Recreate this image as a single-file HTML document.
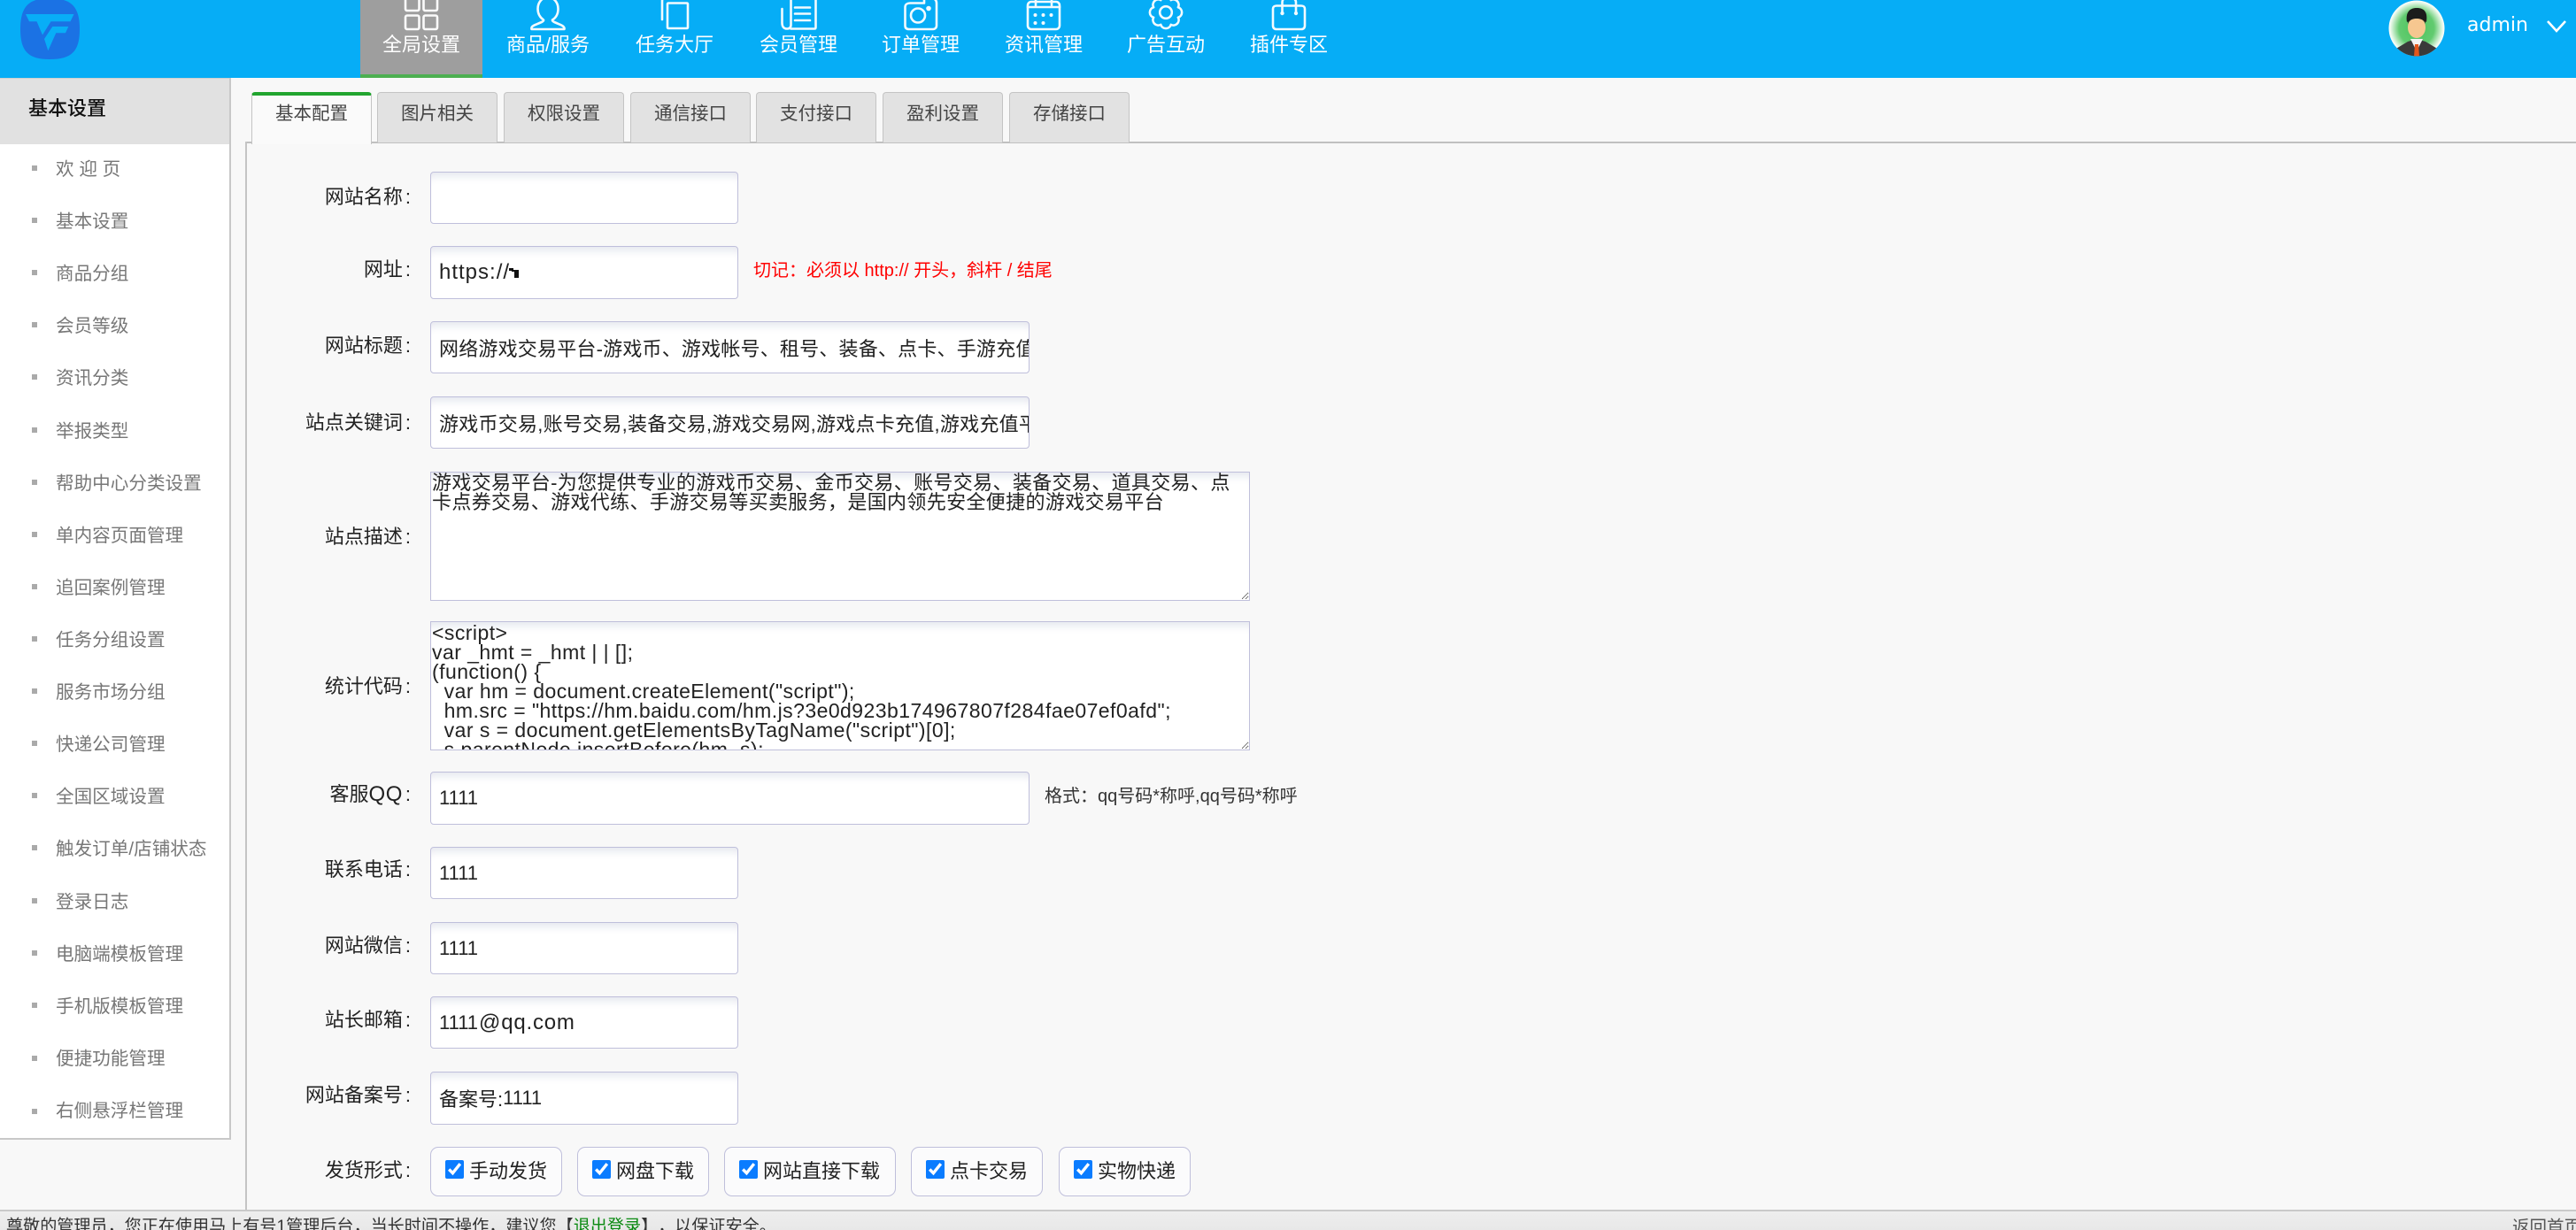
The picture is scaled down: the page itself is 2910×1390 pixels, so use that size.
<!DOCTYPE html>
<html lang="zh">
<head>
<meta charset="utf-8">
<title>管理后台</title>
<style>
*{box-sizing:border-box}
html,body{margin:0;padding:0;width:2910px;height:1390px;overflow:hidden;background:#f8f8f8;font-family:"Liberation Sans","Noto Sans CJK SC",sans-serif;color:#222;text-spacing-trim:space-all}
.a{position:absolute}
#hd{position:absolute;left:0;top:0;width:2910px;height:88px;background:#06adf6;overflow:hidden}
#act{position:absolute;left:407px;top:0;width:138px;height:88px;background:#9e9e9e;border-bottom:4px solid #4caf50}
.nt{position:absolute;top:36px;width:138px;height:30px;line-height:30px;text-align:center;font-size:22px;color:#fff;white-space:nowrap}
#side{position:absolute;left:0;top:88px;width:261px;height:1200px;background:#fff;border-right:2px solid #c8c8c8;border-bottom:2px solid #c8c8c8}
#sh{position:absolute;left:0;top:0;width:259px;height:75px;background:#e1e1e1;border-top:1px solid #d0d0d0;font-size:22px;font-weight:500;color:#111;line-height:67px;padding-left:32px}
.si{position:absolute;left:63px;height:30px;line-height:30px;font-size:20.6px;color:#777;white-space:nowrap;margin-top:2px}
.bl{position:absolute;left:36px;width:6px;height:6px;background:#aaa}
.tab{position:absolute;top:104px;width:136px;height:57px;background:#e2e2e2;border:1px solid #c4c4c4;border-bottom:none;border-radius:4px 4px 0 0;text-align:center;font-size:20.5px;line-height:48px;color:#444}
.tab.on{background:#fafafa;border-top:4px solid #22a52f;height:59px;line-height:42px;z-index:3}
#pl{position:absolute;left:277px;top:160px;width:2633px;height:2px;background:#c0c0c0}
#pv{position:absolute;left:277px;top:160px;width:2px;height:1208px;background:#c4c4c4}
.lb{position:absolute;right:2446px;height:30px;line-height:30px;font-size:22px;color:#222;white-space:nowrap;text-align:right}
.lb i{font-style:normal;margin-left:3px}
.ip{position:absolute;left:486px;background:#fff;border:1.5px solid #bfbfdb;border-radius:4px;box-shadow:inset 0 11px 10px -7px #e4e6ee;font-size:22px;color:#222;white-space:nowrap;overflow:hidden;padding-left:9px;display:flex;align-items:center;height:59px}
.n{font-size:22px}
textarea{position:absolute;left:486px;width:926px;height:146px;margin:0;padding:1px 0 0 1px;border:1.5px solid #bfbfdb;border-radius:0;background:#fff;box-shadow:inset 0 11px 10px -7px #e4e6ee;color:#222;font-family:"Liberation Sans","Noto Sans CJK SC",sans-serif;font-size:22px;line-height:22px;overflow:hidden;white-space:pre;resize:both;outline:none}
.ck{position:absolute;top:1296px;height:56px;background:#fbfbfc;border:1.5px solid #bfbfdb;border-radius:9px;font-size:22px;color:#222;white-space:nowrap}
.ck input{position:absolute;left:15.5px;top:13.5px;width:21px;height:21px;margin:0;accent-color:#0a7cff}
.ck span{position:absolute;left:43px;top:12px;line-height:30px}
#ft{position:absolute;left:0;top:1367px;width:2910px;height:23px;background:linear-gradient(#eee,#e8e8e8);border-top:2px solid #c9c9c9;overflow:hidden;font-size:19.1px;color:#333;z-index:5}
#ft .l{position:absolute;left:7px;top:4px;line-height:28px;white-space:nowrap}
#ft .r{position:absolute;left:2838px;top:4px;line-height:28px;white-space:nowrap;color:#555;font-size:19.5px}
#ft b{font-weight:400;color:#0b8a12}
</style>
</head>
<body>
<div id="hd">
  <svg class="a" style="left:0;top:0" width="130" height="88" viewBox="0 0 130 88">
    <path d="M23 33C23 8 32-2 56-2C81-2 90 8 90 33C90 58 81 67 56 67C32 67 23 58 23 33Z" fill="#1b72e4"/>
    <path d="M29 16H83.500L79.500 24.300H57.500L48 39.500L41.500 24.300H33Z" fill="#08aef7"/>
    <path d="M77.300 30L74 37.300H63.300L54.300 57.300L50 44L59.300 30Z" fill="#08aef7"/>
  </svg>
  <div id="act"></div>
  <svg class="a" style="left:0;top:0" width="1600" height="60" viewBox="0 0 1600 60" fill="none" stroke="#fff" stroke-width="2.600" stroke-linecap="round" stroke-linejoin="round" opacity=".95">
    <rect x="458" y="-4" width="15.500" height="16" rx="2"/><rect x="478.500" y="-4" width="15.500" height="16" rx="2"/>
    <rect x="458" y="17.500" width="15.500" height="15.500" rx="2"/><rect x="478.500" y="17.500" width="15.500" height="15.500" rx="2"/>
    <path d="M619-3C612-3 607.500 3 607.500 10C607.500 16 610.500 20 614 22.500C614.500 24 612 25 606 27.500C601 29.500 600 30.500 600.500 33H637.500C638 30.500 636 29 632 27.500C626 25 623.500 24 624 22.500C628 20 630.500 16 630.500 10C630.500 3 626-3 619-3Z"/>
    <rect x="754" y="3.500" width="23" height="28.500" rx="1"/><path d="M748 22V1C748-1 749-2 751-2H770"/>
    <path d="M883.500 10V26C883.500 30 885.500 32.500 889 32.500C892 32.500 893.500 31 893.500 28V-4M893.500 32.500H920C921 32.500 921.500 32 921.500 31V-4"/>
    <path d="M898 8.500H915M898 15.500H915M898 23H915"/>
    <path d="M1028 3.500H1044V-2H1052C1056 -2 1058 0 1058 4V29C1058 31.500 1056 33 1054 33H1027C1024 33 1022.500 31.500 1022.500 29V8C1022.500 5 1025 3.500 1028 3.500Z"/>
    <circle cx="1037" cy="17.500" r="8"/><circle cx="1049" cy="9.500" r="1.500" fill="#fff"/>
    <rect x="1161" y="2" width="36" height="31" rx="4"/><path d="M1161 8H1197M1170-3V6M1188-3V6"/>
    <g fill="#fff" stroke="none"><circle cx="1169.500" cy="17" r="2"/><circle cx="1178.500" cy="17" r="2"/><circle cx="1187.500" cy="17" r="2"/><circle cx="1169.500" cy="26" r="2"/><circle cx="1178.500" cy="26" r="2"/></g>
    <g transform="translate(1317 14)"><path d="M5.740 13.860A6 6 0 0 0 13.860 5.740A6 6 0 0 0 13.860 -5.740A6 6 0 0 0 5.740 -13.860A6 6 0 0 0 -5.740 -13.860A6 6 0 0 0 -13.860 -5.740A6 6 0 0 0 -13.860 5.740A6 6 0 0 0 -5.740 13.860A6 6 0 0 0 5.740 13.860Z"/><circle r="6.800"/></g>
    <path d="M1442 6.500H1470C1472.500 6.500 1474 8 1474 10V29C1474 31.500 1472.500 33 1470 33H1442C1439.500 33 1438 31.500 1438 29V10C1438 8 1439.500 6.500 1442 6.500Z"/>
    <path d="M1448.500 14V3C1448.500 -2 1452 -3 1456 -3C1460 -3 1464 -2 1464 3V14"/>
    <g fill="#fff" stroke="none"><circle cx="1448.500" cy="15" r="2.200"/><circle cx="1464" cy="15" r="2.200"/></g>
  </svg>
  <div class="nt" style="left:407px">全局设置</div>
  <div class="nt" style="left:550px">商品/服务</div>
  <div class="nt" style="left:693px">任务大厅</div>
  <div class="nt" style="left:833px">会员管理</div>
  <div class="nt" style="left:971px">订单管理</div>
  <div class="nt" style="left:1110px">资讯管理</div>
  <div class="nt" style="left:1248px">广告互动</div>
  <div class="nt" style="left:1387px">插件专区</div>
  <svg class="a" style="left:2698px;top:0" width="64" height="64" viewBox="0 0 64 64">
    <defs>
      <radialGradient id="g" cx="50%" cy="50%" r="50%"><stop offset="0" stop-color="#4ec45e"/><stop offset=".62" stop-color="#62cb70"/><stop offset=".94" stop-color="#f2fbf2"/><stop offset="1" stop-color="#fff"/></radialGradient>
      <clipPath id="c"><circle cx="32" cy="32" r="31.500"/></clipPath>
    </defs>
    <g clip-path="url(#c)">
      <rect width="64" height="64" fill="url(#g)"/>
      <path d="M7 56L22 47L32 44L42 47L57 56V64H7Z" fill="#3a3a3a"/>
      <path d="M25 44L32 58L39 44Z" fill="#f4f4f4"/>
      <path d="M30 50H34L35 64H29Z" fill="#e4571c"/>
      <path d="M21 25C19 12 26 9 32 9C39 9 45 12 43 25L40 23H24Z" fill="#1c1c1c"/>
      <ellipse cx="32" cy="31" rx="10" ry="12" fill="#f6c790"/>
      <path d="M22 27C22 19 26 16 32 19C38 16 42 19 42 27C40 22 36 21 32 21C28 21 24 22 22 27Z" fill="#1c1c1c"/>
    </g>
  </svg>
  <div class="a" style="left:2787px;top:14px;line-height:30px;font-family:'DejaVu Sans',sans-serif;font-size:22px;color:#fff">admin</div>
  <svg class="a" style="left:2875px;top:20px" width="26" height="20" viewBox="0 0 26 20"><path d="M3 4L13 15L23 4" fill="none" stroke="#fff" stroke-width="2.600"/></svg>
</div>

<div id="side">
  <div id="sh">基本设置</div>
</div>
<div class="bl" style="top:187px"></div><div class="si" style="top:175px">欢 迎 页</div>
<div class="bl" style="top:246px"></div><div class="si" style="top:234px">基本设置</div>
<div class="bl" style="top:305px"></div><div class="si" style="top:293px">商品分组</div>
<div class="bl" style="top:364px"></div><div class="si" style="top:352px">会员等级</div>
<div class="bl" style="top:423px"></div><div class="si" style="top:411px">资讯分类</div>
<div class="bl" style="top:483px"></div><div class="si" style="top:471px">举报类型</div>
<div class="bl" style="top:542px"></div><div class="si" style="top:530px">帮助中心分类设置</div>
<div class="bl" style="top:601px"></div><div class="si" style="top:589px">单内容页面管理</div>
<div class="bl" style="top:660px"></div><div class="si" style="top:648px">追回案例管理</div>
<div class="bl" style="top:719px"></div><div class="si" style="top:707px">任务分组设置</div>
<div class="bl" style="top:778px"></div><div class="si" style="top:766px">服务市场分组</div>
<div class="bl" style="top:837px"></div><div class="si" style="top:825px">快递公司管理</div>
<div class="bl" style="top:896px"></div><div class="si" style="top:884px">全国区域设置</div>
<div class="bl" style="top:955px"></div><div class="si" style="top:943px">触发订单/店铺状态</div>
<div class="bl" style="top:1015px"></div><div class="si" style="top:1003px">登录日志</div>
<div class="bl" style="top:1074px"></div><div class="si" style="top:1062px">电脑端模板管理</div>
<div class="bl" style="top:1133px"></div><div class="si" style="top:1121px">手机版模板管理</div>
<div class="bl" style="top:1193px"></div><div class="si" style="top:1180px">便捷功能管理</div>
<div class="bl" style="top:1253px"></div><div class="si" style="top:1239px">右侧悬浮栏管理</div>

<div id="pl"></div><div id="pv"></div>
<div class="tab on" style="left:284px">基本配置</div>
<div class="tab" style="left:426px">图片相关</div>
<div class="tab" style="left:569px">权限设置</div>
<div class="tab" style="left:712px">通信接口</div>
<div class="tab" style="left:854px">支付接口</div>
<div class="tab" style="left:997px">盈利设置</div>
<div class="tab" style="left:1140px">存储接口</div>

<div class="lb" style="top:208px">网站名称<i>:</i></div>
<div class="ip" style="top:194px;width:348px"></div>

<div class="lb" style="top:290px">网址<i>:</i></div>
<div class="ip" style="top:278px;width:348px;height:60px"><span style="font-size:24px;letter-spacing:1px">https://</span></div>
<svg class="a" style="left:575px;top:303px" width="11" height="11" viewBox="0 0 11 11"><path d="M0 0H5V2H11V11H6V4H3V3H0Z" fill="#111"/></svg>
<div class="a" style="left:851px;top:291px;line-height:30px;font-size:20px;color:#f00;white-space:nowrap">切记：必须以 http:// 开头，斜杆 / 结尾</div>

<div class="lb" style="top:376px">网站标题<i>:</i></div>
<div class="ip" style="top:363px;width:677px;letter-spacing:.2px">网络游戏交易平台-游戏币、游戏帐号、租号、装备、点卡、手游充值</div>

<div class="lb" style="top:463px">站点关键词<i>:</i></div>
<div class="ip" style="top:448px;width:677px;letter-spacing:.25px">游戏币交易,账号交易,装备交易,游戏交易网,游戏点卡充值,游戏充值平台</div>

<div class="lb" style="top:592px">站点描述<i>:</i></div>
<textarea style="top:533px;letter-spacing:.35px">游戏交易平台-为您提供专业的游戏币交易、金币交易、账号交易、装备交易、道具交易、点
卡点券交易、游戏代练、手游交易等买卖服务，是国内领先安全便捷的游戏交易平台</textarea>

<div class="lb" style="top:761px">统计代码<i>:</i></div>
<textarea style="top:702px;font-size:23px;letter-spacing:.45px">&lt;script&gt;
var _hmt = _hmt | | [];
(function() {
  var hm = document.createElement("script");
  hm.src = "https://hm.baidu.com/hm.js?3e0d923b174967807f284fae07ef0afd";
  var s = document.getElementsByTagName("script")[0];
  s.parentNode.insertBefore(hm, s);
})();
&lt;/script&gt;</textarea>

<div class="lb" style="top:883px">客服<span style="font-size:24px;letter-spacing:.5px">QQ</span><i>:</i></div>
<div class="ip" style="top:872px;width:677px;height:60px"><span class="n">1111</span></div>
<div class="a" style="left:1180px;top:885px;line-height:30px;font-size:20px;color:#333;white-space:nowrap">格式：qq号码*称呼,qq号码*称呼</div>

<div class="lb" style="top:968px">联系电话<i>:</i></div>
<div class="ip" style="top:957px;width:348px"><span class="n">1111</span></div>

<div class="lb" style="top:1054px">网站微信<i>:</i></div>
<div class="ip" style="top:1042px;width:348px"><span class="n">1111</span></div>

<div class="lb" style="top:1138px">站长邮箱<i>:</i></div>
<div class="ip" style="top:1126px;width:348px"><span class="n">1111</span><span style="font-size:24px;letter-spacing:.8px;margin-left:1px">@qq.com</span></div>

<div class="lb" style="top:1223px">网站备案号<i>:</i></div>
<div class="ip" style="top:1211px;width:348px;height:60px">备案号:<span class="n">1111</span></div>

<div class="lb" style="top:1308px">发货形式<i>:</i></div>
<label class="ck" style="left:486px;width:149px"><input type="checkbox" checked><span>手动发货</span></label>
<label class="ck" style="left:652px;width:149px"><input type="checkbox" checked><span>网盘下载</span></label>
<label class="ck" style="left:818px;width:194px"><input type="checkbox" checked><span>网站直接下载</span></label>
<label class="ck" style="left:1029px;width:149px"><input type="checkbox" checked><span>点卡交易</span></label>
<label class="ck" style="left:1196px;width:149px"><input type="checkbox" checked><span>实物快递</span></label>

<div id="ft">
  <div class="l">尊敬的管理员，您正在使用马上有号1管理后台，当长时间不操作，建议您【<b>退出登录</b>】，以保证安全。</div>
  <div class="r">返回首页</div>
</div>
</body>
</html>
